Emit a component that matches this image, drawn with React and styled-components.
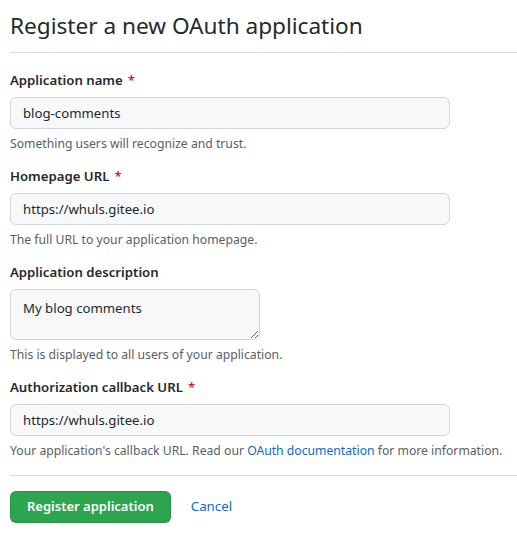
import styled, { createGlobalStyle } from "styled-components";

const GlobalStyle = createGlobalStyle`
  * { box-sizing: border-box; }
  body {
    margin: 0;
    background: #ffffff;
    color: #24292f;
    font-family: "Noto Sans", "Open Sans", "Liberation Sans", sans-serif;
    font-size: 13.2px;
    line-height: 1.5;
  }
`;

const Page = styled.div`
  padding: 8px 0 0 10px;
`;

const Subhead = styled.div`
  padding-bottom: 8px;
  border-bottom: 1px solid #d8dee4;
  margin-bottom: 17px;
`;

const Title = styled.h2`
  margin: 0;
  font-size: 22.6px;
  font-weight: 400;
  line-height: 36px;
`;

const Form = styled.form`
  display: flex;
  flex-direction: column;
`;

const FormGroup = styled.div`
  display: flex;
  flex-direction: column;
  align-items: flex-start;
  margin-bottom: 12px;
`;

const Label = styled.label`
  font-size: 13.2px;
  font-weight: 600;
  line-height: 21px;
  margin-bottom: 6px;
`;

const Required = styled.span`
  color: #cf222e;
  margin-left: 5px;
`;

const Input = styled.input`
  width: 440px;
  height: 32px;
  padding: 5px 12px;
  font: inherit;
  font-size: 13.2px;
  color: #24292f;
  background: #f6f8fa;
  border: 1px solid #d0d7de;
  border-radius: 6px;
  outline: none;
`;

const TextArea = styled.textarea`
  width: 250px;
  height: 51px;
  padding: 8px 12px;
  font: inherit;
  font-size: 13.2px;
  line-height: 20px;
  color: #24292f;
  background: #f6f8fa;
  border: 1px solid #d0d7de;
  border-radius: 6px;
  outline: none;
  resize: both;
`;

const Note = styled.p`
  margin: 5px 0 0;
  font-size: 12.2px;
  line-height: 20px;
  color: #57606a;
`;

const Link = styled.a`
  color: #0969da;
  text-decoration: none;
`;

const Divider = styled.hr`
  margin: 2px 0 15px;
  border: 0;
  border-top: 1px solid #d8dee4;
`;

const Actions = styled.div`
  display: flex;
  align-items: center;
  gap: 20px;
`;

const PrimaryButton = styled.button`
  height: 32px;
  padding: 0 16px;
  font: inherit;
  font-size: 13px;
  font-weight: 600;
  color: #ffffff;
  background: #2da44e;
  border: 1px solid rgba(27, 31, 36, 0.15);
  border-radius: 6px;
  cursor: pointer;
`;

const CancelLink = styled.a`
  font-size: 13.3px;
  color: #0969da;
  text-decoration: none;
`;

const fields = [
  {
    label: "Application name",
    value: "blog-comments",
    note: "Something users will recognize and trust.",
    required: true,
  },
  {
    label: "Homepage URL",
    value: "https://whuls.gitee.io",
    note: "The full URL to your application homepage.",
    required: true,
  },
];

const App = () => {
  return (
    <>
      <GlobalStyle />
      <Page>
        <Subhead>
          <Title>Register a new OAuth application</Title>
        </Subhead>
        <Form onSubmit={(e) => e.preventDefault()}>
          {fields.map((f) => (
            <FormGroup key={f.label}>
              <Label>
                {f.label}
                {f.required && <Required>*</Required>}
              </Label>
              <Input defaultValue={f.value} />
              <Note>{f.note}</Note>
            </FormGroup>
          ))}

          <FormGroup>
            <Label>Application description</Label>
            <TextArea defaultValue="My blog comments" />
            <Note>This is displayed to all users of your application.</Note>
          </FormGroup>

          <FormGroup>
            <Label>
              Authorization callback URL
              <Required>*</Required>
            </Label>
            <Input defaultValue="https://whuls.gitee.io" />
            <Note>
              Your application's callback URL. Read our{" "}
              <Link href="#">OAuth documentation</Link> for more information.
            </Note>
          </FormGroup>

          <Divider />

          <Actions>
            <PrimaryButton type="submit">Register application</PrimaryButton>
            <CancelLink href="#">Cancel</CancelLink>
          </Actions>
        </Form>
      </Page>
    </>
  );
};

export default App;
